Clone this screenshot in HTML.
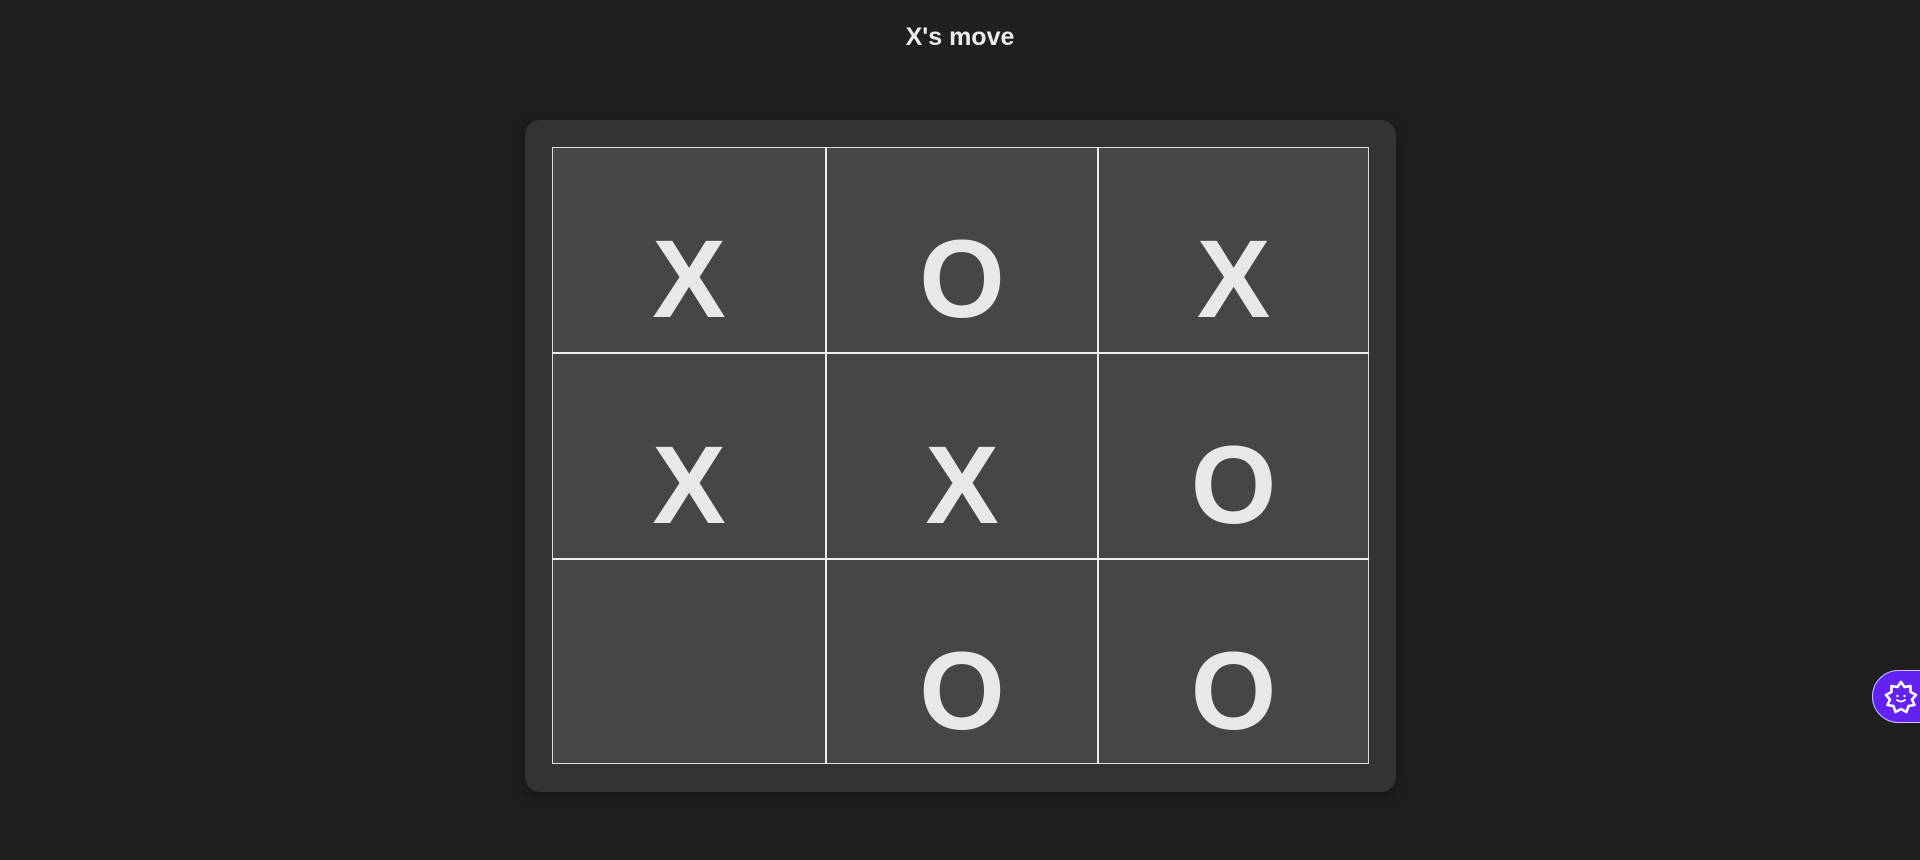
<!DOCTYPE html>
<html><head><meta charset="utf-8"><style>
html,body{margin:0;padding:0;width:1920px;height:860px;background:#1f1f1f;overflow:hidden;font-family:"Liberation Sans",Arial,sans-serif}
.title{position:absolute;left:0;width:1920px;top:22px;text-align:center;color:#ececec;font-weight:bold;font-size:25px;line-height:30px}
.panel{position:absolute;left:525px;top:120px;width:871px;height:672px;background:#333;border-radius:15px;box-shadow:0 4px 18px rgba(0,0,0,.35)}
.grid{position:absolute;left:552px;top:147px;width:817px;height:617px;border:1px solid #ddd;box-sizing:border-box}
.cell{position:absolute;background:#464646;box-sizing:border-box}
.cell span{position:absolute;left:0;right:0;top:77px;text-align:center;font-weight:bold;font-size:110px;line-height:110px;color:#e8e8e8}
.vl{position:absolute;top:147px;width:2px;height:617px;background:#eee}
.hl{position:absolute;left:552px;width:817px;height:2px;background:#eee}
.widget{position:absolute;left:1872px;top:670px;width:60px;height:53px;background:#6322f2;border:1px solid #cfc6ff;border-radius:27px 0 0 27px;box-sizing:border-box}
</style></head><body>
<div class="title">X's move</div>
<div class="panel"></div>
<div class="grid"></div>
<div class="cell" style="left:553px;top:148px;width:272px;height:204px"><span>X</span></div>
<div class="cell" style="left:827px;top:148px;width:270px;height:204px"><span>O</span></div>
<div class="cell" style="left:1099px;top:148px;width:269px;height:204px"><span>X</span></div>
<div class="cell" style="left:553px;top:354px;width:272px;height:204px"><span>X</span></div>
<div class="cell" style="left:827px;top:354px;width:270px;height:204px"><span>X</span></div>
<div class="cell" style="left:1099px;top:354px;width:269px;height:204px"><span>O</span></div>
<div class="cell" style="left:553px;top:560px;width:272px;height:203px"></div>
<div class="cell" style="left:827px;top:560px;width:270px;height:203px"><span>O</span></div>
<div class="cell" style="left:1099px;top:560px;width:269px;height:203px"><span>O</span></div>
<div class="vl" style="left:825px"></div>
<div class="vl" style="left:1097px"></div>
<div class="hl" style="top:352px"></div>
<div class="hl" style="top:558px"></div>
<div class="widget">
<svg width="40" height="40" viewBox="0 0 40 40" style="position:absolute;left:8px;top:6px">
<path d="M20 5 L23.5 10 L29.5 9 L29.5 15 L35 18 L31 22.5 L33.5 28 L27.5 29 L25.5 35 L20 32 L14.5 35 L12.5 29 L6.5 28 L9 22.5 L5 18 L10.5 15 L10.5 9 L16.5 10 Z" fill="none" stroke="#fff" stroke-width="2.6" stroke-linejoin="round"/>
<circle cx="16.5" cy="19" r="1.2" fill="#fff"/><circle cx="23.5" cy="19" r="1.2" fill="#fff"/>
<path d="M16 23 Q20 26 24 23" fill="none" stroke="#fff" stroke-width="1.8" stroke-linecap="round"/>
</svg></div>
</body></html>
